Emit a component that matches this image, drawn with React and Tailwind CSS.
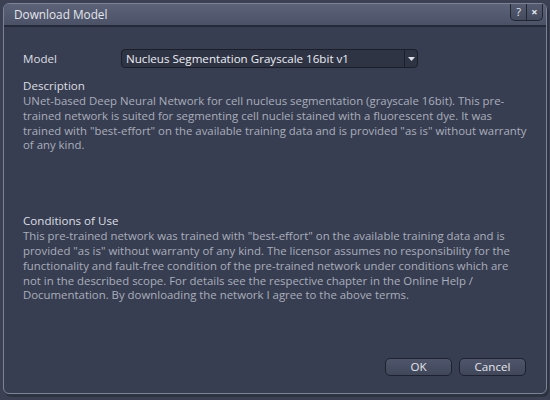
import React from 'react';

const descLines = [
  'UNet-based Deep Neural Network for cell nucleus segmentation (grayscale 16bit). This pre-',
  'trained network is suited for segmenting cell nuclei stained with a fluorescent dye. It was',
  'trained with "best-effort" on the available training data and is provided "as is" without warranty',
  'of any kind.',
];

const condLines = [
  'This pre-trained network was trained with "best-effort" on the available training data and is',
  'provided "as is" without warranty of any kind. The licensor assumes no responsibility for the',
  'functionality and fault-free condition of the pre-trained network under conditions which are',
  'not in the described scope. For details see the respective chapter in the Online Help /',
  'Documentation. By downloading the network I agree to the above terms.',
];

function Lines({ lines }) {
  return (
    <div className="text-[#a9aebb] text-[11.4px] leading-[14.8px]">
      {lines.map((l, i) => (
        <div key={i} className="whitespace-nowrap">{l}</div>
      ))}
    </div>
  );
}

export default function App() {
  return (
    <div
      className="w-[550px] h-[400px] bg-[#3b4152] p-[3px] pb-[6px] overflow-hidden"
      style={{ fontFamily: '"Open Sans", "Noto Sans", sans-serif' }}
    >
      <div className="h-full flex flex-col rounded-[6px] border border-[#7d8396] bg-[#383e51] shadow-[2px_3px_0_#22263180] overflow-hidden">
        {/* title bar */}
        <div className="h-[23px] flex items-center justify-between bg-gradient-to-b from-[#5c6278] to-[#4b5167] border-b-[2px] border-[#252a37] pl-[10px] pr-[3px]">
          <span className="text-[#e4e6ea] text-[11.8px]">Download Model</span>
          <div className="flex self-start h-[17px] rounded-b-[5px] border border-t-0 border-[#22262f] bg-gradient-to-b from-[#555b70] to-[#454b5f] overflow-hidden">
            <div className="w-[16px] flex items-center justify-center text-[#e8eaee] text-[11px] border-r border-[#22262f]">?</div>
            <div className="w-[15px] flex items-center justify-center text-[#e8eaee] text-[11px] font-bold">×</div>
          </div>
        </div>

        {/* body */}
        <div className="flex-1 flex flex-col pl-[19px] pr-[20px] pt-[22px] pb-[17px]">
          <div className="flex items-center h-[19px]">
            <span className="w-[98px] text-[#dcdee3] text-[11.6px]">Model</span>
            <div className="w-[297px] h-[19px] flex rounded-[4px] border border-[#1c1f28] bg-[#2f3444]">
              <span className="flex-1 pl-[4px] text-[#eceef2] text-[11.6px] leading-[17px] whitespace-nowrap">
                Nucleus Segmentation Grayscale 16bit v1
              </span>
              <div className="w-[13px] border-l border-[#1c1f28] flex items-center justify-center">
                <svg width="7" height="4" viewBox="0 0 7 4"><path d="M0 0h7L3.5 4z" fill="#e0e2e8" /></svg>
              </div>
            </div>
          </div>

          <div className="mt-[10px] mb-[1px] text-[#dcdee3] text-[11.6px] leading-[15px]">Description</div>
          <Lines lines={descLines} />

          <div className="mt-[60px] mb-[1px] text-[#dcdee3] text-[11.6px] leading-[15px]">Conditions of Use</div>
          <Lines lines={condLines} />

          <div className="mt-auto flex justify-end gap-[7px]">
            <button className="w-[67px] h-[18px] rounded-[5px] border border-[#1e222c] bg-gradient-to-b from-[#4f556a] to-[#41475b] text-[#e4e6ea] text-[11.6px] leading-[16px]">OK</button>
            <button className="w-[67px] h-[18px] rounded-[5px] border border-[#1e222c] bg-gradient-to-b from-[#4f556a] to-[#41475b] text-[#e4e6ea] text-[11.6px] leading-[16px]">Cancel</button>
          </div>
        </div>
      </div>
    </div>
  );
}
